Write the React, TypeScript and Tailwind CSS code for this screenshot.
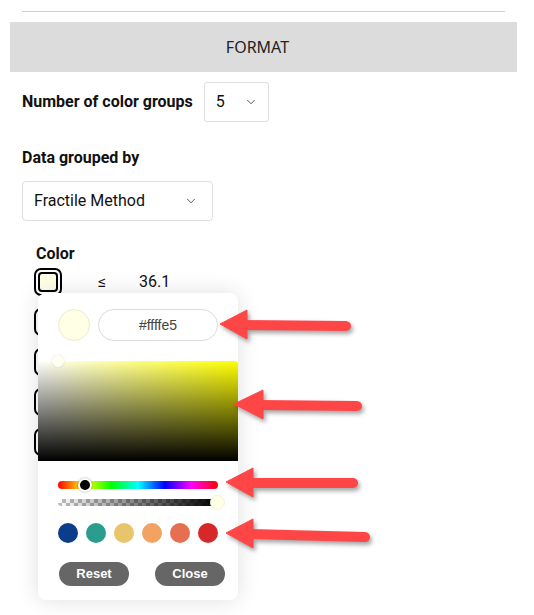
import { ChevronDown } from "lucide-react";

const PRESETS = ["#0b3d8c", "#2a9d8f", "#e9c46a", "#f4a261", "#e76f51", "#d62828"];

// 箭头标注 (tip x, tip y, back x, tail x, tail y)
const ARROWS = [
  { tx: 220, ty: 324, bx: 247, ex: 346, ey: 326 },
  { tx: 234, ty: 404, bx: 263, ex: 357, ey: 406 },
  { tx: 226, ty: 482, bx: 253, ex: 353, ey: 483 },
  { tx: 226, ty: 533, bx: 253, ex: 365, ey: 537 },
];

const Swatch = ({ fill }: { fill: string }) => (
  <div className="w-[28px] h-[28px] rounded-[7px] border-2 border-black bg-white p-[2px]">
    <div className="w-full h-full rounded-[4px] border-2 border-black" style={{ background: fill }} />
  </div>
);

const ColorPicker = () => (
  <div className="absolute left-[38px] top-[293px] w-[200px] h-[307px] rounded-[8px] bg-white shadow-[0_0_22px_rgba(0,0,0,0.13)] font-['Liberation_Sans',Arial,sans-serif]">
    <div className="flex items-center gap-[8px] pl-[20px] pt-[16px]">
      <div className="w-[32px] h-[32px] rounded-full bg-[#ffffe5] border border-[#ecebcf]" />
      <div className="w-[120px] h-[32px] rounded-full border border-[#dcdcdc] flex items-center justify-center text-[14px] text-[#444]">
        #ffffe5
      </div>
    </div>

    <div className="relative mt-[20px] h-[100px] rounded-tr-[3px] bg-[image:linear-gradient(to_top,#000,transparent),linear-gradient(to_right,#fff,#ff0)]">
      <div className="absolute left-[14px] top-[-6px] w-[12px] h-[12px] rounded-full bg-[#fffff0] border border-white shadow-[0_0_2px_rgba(0,0,0,0.15)]" />
    </div>

    <div className="px-[20px]">
      <div className="relative mt-[20px] h-[8px] rounded-full bg-[linear-gradient(to_right,#f00,#ff0,#0f0,#0ff,#00f,#f0f,#f00)]">
        <div className="absolute left-[20px] top-[-3px] w-[14px] h-[14px] rounded-full bg-black border-2 border-white shadow-[0_0_2px_rgba(0,0,0,0.4)]" />
      </div>
      <div className="relative mt-[10px] h-[7px] rounded-full bg-[image:linear-gradient(to_right,rgba(0,0,0,0),#000),repeating-conic-gradient(#bdbdbd_0%_25%,#fff_0%_50%)] bg-[length:100%_100%,8px_8px]">
        <div className="absolute right-[-7px] top-[-4px] w-[15px] h-[15px] rounded-full bg-[#ffffe5] border border-[#f4f3dc]" />
      </div>
      <div className="flex gap-[8px] mt-[17px]">
        {PRESETS.map((c) => (
          <div key={c} className="w-[20px] h-[20px] rounded-full" style={{ background: c }} />
        ))}
      </div>
    </div>

    <div className="flex gap-[26px] pl-[21px] mt-[19px]">
      <button className="w-[70px] h-[24px] rounded-full bg-[#666] text-white text-[13px] font-bold">Reset</button>
      <button className="w-[70px] h-[24px] rounded-full bg-[#666] text-white text-[13px] font-bold">Close</button>
    </div>
  </div>
);

export default function App() {
  return (
    <div className="relative w-[534px] h-[615px] bg-white overflow-hidden font-['Roboto',sans-serif] text-[#111]">
      <div className="pt-[11px] px-[22px] pr-[29px]">
        <div className="border-t border-[#cfcfcf]" />
      </div>

      <div className="mx-[10px] mr-[17px] mt-[10px] h-[50px] bg-[#dcdcdc] flex items-center justify-center text-[16px] text-[#222] font-['Noto_Sans',sans-serif]">
        <span className="mr-[12px]">FORMAT</span>
      </div>

      <div className="flex items-center gap-[11px] pl-[22px] mt-[10px]">
        <span className="text-[16px] font-bold">Number of color groups</span>
        <div className="w-[65px] h-[40px] border border-[#dedede] rounded-[3px] flex items-center pl-[11px] gap-[19px] text-[16px]">
          5 <ChevronDown size={14} strokeWidth={1.5} className="text-[#444]" />
        </div>
      </div>

      <div className="pl-[22px] mt-[26px] text-[16px] font-bold leading-[20px]">Data grouped by</div>
      <div className="ml-[22px] mt-[13px] w-[191px] h-[40px] border border-[#dedede] rounded-[4px] flex items-center justify-between pl-[11px] pr-[14px] text-[16px]">
        Fractile Method
        <ChevronDown size={14} strokeWidth={1.5} className="text-[#444]" />
      </div>

      <div className="pl-[36px] mt-[24px] text-[16px] font-bold leading-[18px]">Color</div>
      <div className="flex flex-col gap-[12px] pl-[34px] mt-[5px]">
        <div className="flex items-center text-[16px]">
          <Swatch fill="#ffffe5" />
          <span className="ml-[36px] w-[41px]">≤</span>
          <span>36.1</span>
        </div>
        {["#c7e9b4", "#7fcdbb", "#41b6c4", "#225ea8"].map((c) => (
          <div key={c} className="flex items-center">
            <Swatch fill={c} />
          </div>
        ))}
      </div>

      <ColorPicker />

      <svg
        className="absolute inset-0 pointer-events-none"
        width={534}
        height={615}
        style={{ filter: "drop-shadow(2px 3px 2px rgba(0,0,0,0.35))" }}
      >
        {ARROWS.map((a, i) => (
          <g key={i} fill="#ff4646" stroke="#ff4646">
            <line x1={a.bx - 4} y1={a.ty + 1} x2={a.ex} y2={a.ey} strokeWidth={10} strokeLinecap="round" />
            <polygon points={`${a.tx},${a.ty} ${a.bx},${a.ty - 14} ${a.bx},${a.ty + 15}`} strokeWidth={1} strokeLinejoin="round" />
          </g>
        ))}
      </svg>
    </div>
  );
}
